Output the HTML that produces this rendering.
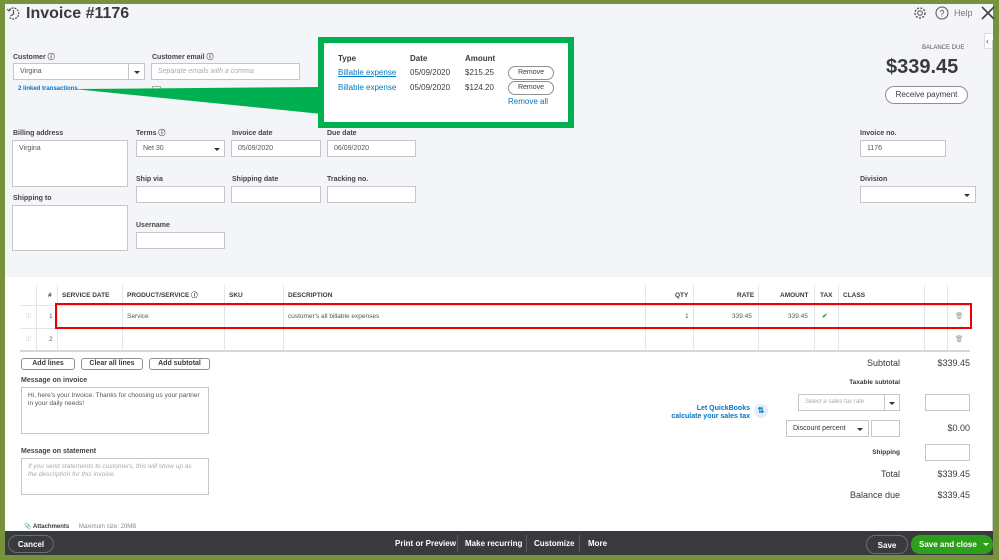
<!DOCTYPE html>
<html><head><meta charset="utf-8"><style>
*{box-sizing:border-box;margin:0;padding:0}
body{width:999px;height:560px;overflow:hidden;background:#76923c;font-family:"Liberation Sans",sans-serif;color:#393a3d;position:relative}
.a{position:absolute}
.lbl{position:absolute;font-size:7px;font-weight:bold;color:#444;line-height:9px}
.inp{position:absolute;background:#fff;border:1px solid #c4c6ca;font-size:7px;padding:0 6px;line-height:15px;color:#555}
.ph{color:#aaa;font-style:italic}
.tri{position:absolute;width:0;height:0;border-left:3px solid transparent;border-right:3px solid transparent;border-top:3px solid #333}
.btn{position:absolute;border:1px solid #8d9096;border-radius:3px;background:#fff;font-size:7px;text-align:center;line-height:10px;font-weight:bold;color:#393a3d}
.vl{position:absolute;width:1px;background:#e3e5e8}
.r{text-align:right}
.fb{position:absolute;color:#fff;font-size:8px;font-weight:bold;top:539px;line-height:10px}
.row span{position:absolute;top:0;line-height:9px}
</style></head><body>
<div class="a" style="left:5px;top:4px;width:988px;height:551px;background:#fff"></div>
<div class="a" style="left:5px;top:4px;width:988px;height:273px;background:#f4f5f8"></div>
<svg class="a" style="left:6px;top:6px" width="15" height="15" viewBox="0 0 15 15"><path d="M3 4 A5.5 5.5 0 1 1 3 11" fill="none" stroke="#555" stroke-width="1.2" stroke-dasharray="2 1"/><path d="M7.5 4v4l-3 2" fill="none" stroke="#555" stroke-width="1.2"/><path d="M1 3l2 2 2-2" fill="none" stroke="#555" stroke-width="1"/></svg>
<div class="a" style="left:26px;top:5px;font-size:16px;font-weight:bold;color:#393a3d">Invoice #1176</div>
<svg class="a" style="left:913px;top:6px" width="14" height="14" viewBox="0 0 14 14"><circle cx="7" cy="7" r="2.3" fill="none" stroke="#555"/><circle cx="7" cy="7" r="5" fill="none" stroke="#555" stroke-width="1.4" stroke-dasharray="2 1.4"/></svg>
<svg class="a" style="left:935px;top:6px" width="14" height="14" viewBox="0 0 14 14"><circle cx="7" cy="7" r="6" fill="none" stroke="#555"/><text x="7" y="10.5" font-size="9" text-anchor="middle" fill="#555" font-family="Liberation Sans">?</text></svg>
<div class="a" style="left:954px;top:8px;font-size:9px;color:#777">Help</div>
<svg class="a" style="left:981px;top:6px" width="14" height="14"><path d="M1 1L13 13M13 1L1 13" stroke="#444" stroke-width="1.6"/></svg>
<div class="a" style="left:984px;top:33px;width:9px;height:16px;background:#fff;border:1px solid #ddd;border-right:none;color:#0077c5;font-size:9px;line-height:14px;padding-left:1px">‹</div>
<div class="a" style="left:992px;top:40px;width:1px;height:491px;background:#ccc"></div>

<div class="lbl" style="left:13px;top:53px">Customer ⓘ</div>
<div class="inp" style="left:13px;top:63px;width:132px;height:17px">Virgina</div>
<div class="a" style="left:128px;top:63px;width:1px;height:17px;background:#c4c6ca"></div>
<div class="tri" style="left:134px;top:71px"></div>
<div class="a" style="left:18px;top:86px;font-size:6px;color:#0077c5;font-weight:bold">2 linked transactions</div>
<div class="lbl" style="left:152px;top:53px">Customer email ⓘ</div>
<div class="inp ph" style="left:151px;top:63px;width:149px;height:17px">Separate emails with a comma</div>
<div class="a" style="left:152px;top:86px;width:9px;height:6px;border:1px solid #aaa;border-bottom:none"></div>

<div class="lbl" style="left:13px;top:129px">Billing address</div>
<div class="inp" style="left:12px;top:140px;width:116px;height:47px">Virgina</div>
<div class="lbl" style="left:13px;top:194px">Shipping to</div>
<div class="inp" style="left:12px;top:205px;width:116px;height:46px"></div>
<div class="lbl" style="left:136px;top:129px">Terms ⓘ</div>
<div class="inp" style="left:136px;top:140px;width:89px;height:17px">Net 30</div>
<div class="tri" style="left:214px;top:148px"></div>
<div class="lbl" style="left:232px;top:129px">Invoice date</div>
<div class="inp" style="left:231px;top:140px;width:90px;height:17px">05/09/2020</div>
<div class="lbl" style="left:327px;top:129px">Due date</div>
<div class="inp" style="left:327px;top:140px;width:89px;height:17px">06/09/2020</div>
<div class="lbl" style="left:136px;top:175px">Ship via</div>
<div class="inp" style="left:136px;top:186px;width:89px;height:17px"></div>
<div class="lbl" style="left:232px;top:175px">Shipping date</div>
<div class="inp" style="left:231px;top:186px;width:90px;height:17px"></div>
<div class="lbl" style="left:327px;top:175px">Tracking no.</div>
<div class="inp" style="left:327px;top:186px;width:89px;height:17px"></div>
<div class="lbl" style="left:136px;top:221px">Username</div>
<div class="inp" style="left:136px;top:232px;width:89px;height:17px"></div>

<div class="a" style="left:922px;top:45px;font-size:6px;color:#555">BALANCE DUE</div>
<div class="a" style="left:886px;top:56px;font-size:20px;font-weight:bold;color:#393a3d">$339.45</div>
<div class="a" style="left:885px;top:86px;width:83px;height:18px;border:1px solid #8d9096;border-radius:9px;background:#fff;font-size:8px;text-align:center;line-height:16px">Receive payment</div>
<div class="lbl" style="left:860px;top:129px">Invoice no.</div>
<div class="inp" style="left:860px;top:140px;width:86px;height:17px">1176</div>
<div class="lbl" style="left:860px;top:175px">Division</div>
<div class="inp" style="left:860px;top:186px;width:116px;height:17px"></div>
<div class="tri" style="left:964px;top:194px"></div>

<svg class="a" style="left:0;top:0" width="330" height="130"><polygon points="74,89 322,87 322,114" fill="#00b050"/></svg>
<div class="a" style="left:318px;top:37px;width:256px;height:91px;border:6px solid #00b050;background:#fff"></div>
<div class="a" style="left:338px;top:54px;font-size:8px;font-weight:bold">Type</div>
<div class="a" style="left:410px;top:54px;font-size:8px;font-weight:bold">Date</div>
<div class="a" style="left:465px;top:54px;font-size:8px;font-weight:bold">Amount</div>
<div class="a" style="left:338px;top:68px;font-size:8px;color:#0077c5;text-decoration:underline">Billable expense</div>
<div class="a" style="left:338px;top:83px;font-size:8px;color:#0077c5">Billable expense</div>
<div class="a" style="left:410px;top:68px;font-size:8px">05/09/2020</div>
<div class="a" style="left:410px;top:83px;font-size:8px">05/09/2020</div>
<div class="a" style="left:465px;top:68px;font-size:8px">$215.25</div>
<div class="a" style="left:465px;top:83px;font-size:8px">$124.20</div>
<div class="a" style="left:508px;top:66px;width:46px;height:14px;border:1px solid #8d9096;border-radius:7px;font-size:7px;text-align:center;line-height:12px">Remove</div>
<div class="a" style="left:508px;top:81px;width:46px;height:14px;border:1px solid #8d9096;border-radius:7px;font-size:7px;text-align:center;line-height:12px">Remove</div>
<div class="a" style="left:508px;top:97px;font-size:8px;color:#0077c5">Remove all</div>

<div class="a" style="left:20px;top:305px;width:950px;height:1px;background:#e3e5e8"></div>
<div class="a" style="left:20px;top:328px;width:950px;height:1px;background:#e3e5e8"></div>
<div class="a" style="left:20px;top:350px;width:950px;height:2px;background:#d4d7dc"></div>
<div class="vl" style="left:36px;top:285px;height:66px"></div>
<div class="vl" style="left:57px;top:285px;height:66px"></div>
<div class="vl" style="left:122px;top:285px;height:66px"></div>
<div class="vl" style="left:224px;top:285px;height:66px"></div>
<div class="vl" style="left:283px;top:285px;height:66px"></div>
<div class="vl" style="left:645px;top:285px;height:66px"></div>
<div class="vl" style="left:693px;top:285px;height:66px"></div>
<div class="vl" style="left:758px;top:285px;height:66px"></div>
<div class="vl" style="left:814px;top:285px;height:66px"></div>
<div class="vl" style="left:838px;top:285px;height:66px"></div>
<div class="vl" style="left:924px;top:285px;height:66px"></div>
<div class="vl" style="left:947px;top:285px;height:66px"></div>
<div class="a row" style="top:291px;left:0;width:999px;height:10px;font-size:6.5px;font-weight:bold;color:#393a3d">
<span style="left:48px">#</span><span style="left:62px">SERVICE DATE</span><span style="left:127px">PRODUCT/SERVICE ⓘ</span><span style="left:229px">SKU</span><span style="left:288px">DESCRIPTION</span><span style="left:675px">QTY</span><span style="left:737px">RATE</span><span style="left:780px">AMOUNT</span><span style="left:820px">TAX</span><span style="left:843px">CLASS</span></div>
<div class="a row" style="top:312px;left:0;width:999px;height:10px;font-size:6.5px;color:#555">
<span style="left:26px;color:#bbb">⁞⁞⁞</span><span style="left:49px">1</span><span style="left:127px">Service</span><span style="left:288px">customer's all billable expenses</span><span style="left:685px">1</span><span style="left:732px">339.45</span><span style="left:788px">339.45</span><span style="left:822px;color:#2ca01c;font-weight:bold">✔</span><span style="left:955px;color:#999">🗑</span></div>
<div class="a row" style="top:335px;left:0;width:999px;height:10px;font-size:6.5px;color:#555">
<span style="left:26px;color:#bbb">⁞⁞⁞</span><span style="left:49px">2</span><span style="left:955px;color:#999">🗑</span></div>
<div class="a" style="left:55px;top:303px;width:917px;height:26px;border:2px solid #e00"></div>

<div class="btn" style="left:21px;top:358px;width:54px;height:12px">Add lines</div>
<div class="btn" style="left:81px;top:358px;width:62px;height:12px">Clear all lines</div>
<div class="btn" style="left:149px;top:358px;width:61px;height:12px">Add subtotal</div>
<div class="lbl" style="left:21px;top:376px">Message on invoice</div>
<div class="inp" style="left:21px;top:387px;width:188px;height:47px;font-size:6.5px;line-height:8px;padding-top:4px">Hi, here's your Invoice. Thanks for choosing us your partner in your daily needs!</div>
<div class="lbl" style="left:21px;top:447px">Message on statement</div>
<div class="inp ph" style="left:21px;top:458px;width:188px;height:37px;font-size:6.5px;line-height:8px;padding-top:4px">If you send statements to customers, this will show up as the description for this invoice.</div>
<div class="a" style="left:24px;top:523px;font-size:6px;font-weight:bold">📎 Attachments <span style="font-weight:normal;color:#888;margin-left:8px">Maximum size: 20MB</span></div>

<div class="a r" style="left:820px;top:358px;width:80px;font-size:9px">Subtotal</div>
<div class="a r" style="left:900px;top:358px;width:70px;font-size:9px">$339.45</div>
<div class="a r" style="left:820px;top:379px;width:80px;font-size:6.5px;font-weight:bold">Taxable subtotal</div>
<div class="a r" style="left:660px;top:405px;width:90px;font-size:7px;font-weight:bold;color:#0077c5;line-height:8px">Let QuickBooks<br>calculate your sales tax</div>
<div class="a" style="left:754px;top:404px;width:14px;height:14px;border-radius:7px;background:#e3eef9;color:#0077c5;font-size:8px;text-align:center;line-height:14px;font-weight:bold">⇅</div>
<div class="inp ph" style="left:798px;top:394px;width:102px;height:17px;font-size:6px">Select a sales tax rate</div>
<div class="a" style="left:884px;top:394px;width:1px;height:17px;background:#c4c6ca"></div>
<div class="tri" style="left:889px;top:402px"></div>
<div class="inp" style="left:925px;top:394px;width:45px;height:17px"></div>
<div class="inp" style="left:786px;top:420px;width:83px;height:17px;color:#333">Discount percent</div>
<div class="tri" style="left:857px;top:428px"></div>
<div class="inp" style="left:871px;top:420px;width:29px;height:17px"></div>
<div class="a r" style="left:900px;top:423px;width:70px;font-size:9px">$0.00</div>
<div class="a r" style="left:820px;top:449px;width:80px;font-size:6.5px;font-weight:bold">Shipping</div>
<div class="inp" style="left:925px;top:444px;width:45px;height:17px"></div>
<div class="a r" style="left:820px;top:469px;width:80px;font-size:9px">Total</div>
<div class="a r" style="left:900px;top:469px;width:70px;font-size:9px">$339.45</div>
<div class="a r" style="left:820px;top:490px;width:80px;font-size:9px">Balance due</div>
<div class="a r" style="left:900px;top:490px;width:70px;font-size:9px">$339.45</div>

<div class="a" style="left:5px;top:531px;width:988px;height:24px;background:#393a3d"></div>
<div class="a" style="left:8px;top:535px;width:46px;height:18px;border:1px solid #6b6c72;border-radius:9px;color:#fff;font-size:8px;font-weight:bold;text-align:center;line-height:17px">Cancel</div>
<div class="fb" style="left:395px">Print or Preview</div>
<div class="a" style="left:457px;top:535px;width:1px;height:17px;background:#5a5b60"></div>
<div class="fb" style="left:465px">Make recurring</div>
<div class="a" style="left:526px;top:535px;width:1px;height:17px;background:#5a5b60"></div>
<div class="fb" style="left:534px">Customize</div>
<div class="a" style="left:579px;top:535px;width:1px;height:17px;background:#5a5b60"></div>
<div class="fb" style="left:588px">More</div>
<div class="a" style="left:866px;top:535px;width:42px;height:19px;border:1px solid #6b6c72;border-radius:9px;color:#fff;font-size:8px;font-weight:bold;text-align:center;line-height:19px">Save</div>
<div class="a" style="left:911px;top:535px;width:82px;height:19px;background:#2ca01c;border-radius:9px;color:#fff;font-size:8px;font-weight:bold;line-height:19px;padding-left:8px">Save and close</div>
<div class="a" style="left:983px;top:543px;width:0;height:0;border-left:3px solid transparent;border-right:3px solid transparent;border-top:3px solid #fff"></div>
</body></html>
